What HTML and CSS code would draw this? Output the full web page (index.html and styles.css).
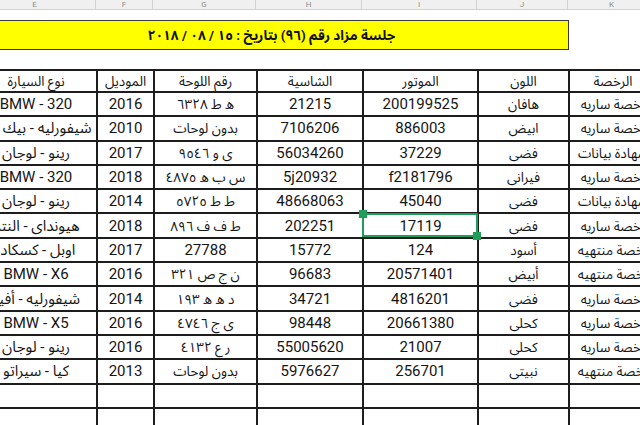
FILE: index.html
```html
<!DOCTYPE html>
<html lang="ar">
<head>
<meta charset="utf-8">
<link rel="stylesheet" href="styles.css">
</head>
<body>
<div class="sheet">
  <div class="colbar">
    <div>E</div><div>F</div><div>G</div><div>H</div><div>I</div><div>J</div><div>K</div>
  </div>
  <div class="titlebar" dir="rtl">جلسة مزاد رقم (٩٦) بتاريخ : ١٥ / ٠٨ / ٢٠١٨</div>
  <div class="grid-wrap">
    <table class="data">
      <colgroup>
        <col class="c-e"><col class="c-f"><col class="c-g"><col class="c-h"><col class="c-i"><col class="c-j"><col class="c-k">
      </colgroup>
      <thead>
        <tr><th class="ar" dir="rtl">نوع السيارة</th><th class="ar" dir="rtl">الموديل</th><th class="ar" dir="rtl">رقم اللوحة</th><th class="ar" dir="rtl">الشاسية</th><th class="ar" dir="rtl">الموتور</th><th class="ar" dir="rtl">اللون</th><th class="ar" dir="rtl">الرخصة</th></tr>
      </thead>
      <tbody>
        <tr><td>BMW - 320</td><td>2016</td><td class="ar" dir="rtl">ه ط ٦٣٢٨</td><td>21215</td><td>200199525</td><td class="ar" dir="rtl">هافان</td><td class="ar" dir="rtl">رخصة ساريه</td></tr>
        <tr><td dir="rtl">شيفورليه - بيك أب</td><td>2010</td><td class="ar" dir="rtl">بدون لوحات</td><td>7106206</td><td>886003</td><td class="ar" dir="rtl">ابيض</td><td class="ar" dir="rtl">رخصة ساريه</td></tr>
        <tr><td dir="rtl">رينو - لوجان</td><td>2017</td><td class="ar" dir="rtl">ى و ٩٥٤٦</td><td>56034260</td><td>37229</td><td class="ar" dir="rtl">فضى</td><td class="ar" dir="rtl">شهادة بيانات</td></tr>
        <tr><td>BMW - 320</td><td>2018</td><td class="ar" dir="rtl">س ب ه ٤٨٧٥</td><td>5j20932</td><td>f2181796</td><td class="ar" dir="rtl">فيرانى</td><td class="ar" dir="rtl">رخصة ساريه</td></tr>
        <tr><td dir="rtl">رينو - لوجان</td><td>2014</td><td class="ar" dir="rtl">ط ط ٥٧٢٥</td><td>48668063</td><td>45040</td><td class="ar" dir="rtl">فضى</td><td class="ar" dir="rtl">شهادة بيانات</td></tr>
        <tr><td dir="rtl">هيونداى - النترا</td><td>2018</td><td class="ar" dir="rtl">ط ف ف ٨٩٦</td><td>202251</td><td>17119</td><td class="ar" dir="rtl">فضى</td><td class="ar" dir="rtl">رخصة ساريه</td></tr>
        <tr><td dir="rtl">اوبل - كسكادا</td><td>2017</td><td>27788</td><td>15772</td><td>124</td><td class="ar" dir="rtl">أسود</td><td class="ar" dir="rtl">رخصة منتهيه</td></tr>
        <tr><td>BMW - X6</td><td>2016</td><td class="ar" dir="rtl">ن ج ص ٣٢١</td><td>96683</td><td>20571401</td><td class="ar" dir="rtl">أبيض</td><td class="ar" dir="rtl">رخصة منتهيه</td></tr>
        <tr><td dir="rtl">شيفورليه - أفيو</td><td>2014</td><td class="ar" dir="rtl">د ه ه ١٩٣</td><td>34721</td><td>4816201</td><td class="ar" dir="rtl">فضى</td><td class="ar" dir="rtl">رخصة ساريه</td></tr>
        <tr><td>BMW - X5</td><td>2016</td><td class="ar" dir="rtl">ى ج ٤٧٤٦</td><td>98448</td><td>20661380</td><td class="ar" dir="rtl">كحلى</td><td class="ar" dir="rtl">رخصة ساريه</td></tr>
        <tr><td dir="rtl">رينو - لوجان</td><td>2016</td><td class="ar" dir="rtl">ر ع ٤١٣٢</td><td>55005620</td><td>21007</td><td class="ar" dir="rtl">كحلى</td><td class="ar" dir="rtl">رخصة ساريه</td></tr>
        <tr><td dir="rtl">كيا - سيراتو</td><td>2013</td><td class="ar" dir="rtl">بدون لوحات</td><td>5976627</td><td>256701</td><td class="ar" dir="rtl">نبيتى</td><td class="ar" dir="rtl">رخصة منتهيه</td></tr>
        <tr><td></td><td></td><td></td><td></td><td></td><td></td><td></td></tr>
        <tr><td></td><td></td><td></td><td></td><td></td><td></td><td></td></tr>
      </tbody>
    </table>
    <div class="sel"><span class="handle tl"></span><span class="handle br"></span></div>
  </div>
</div>
</body>
</html>
```
FILE: styles.css
```css
html, body {
  margin: 0;
  padding: 0;
  background: #ffffff;
  overflow: hidden;
}
body {
  width: 640px;
  height: 425px;
  font-family: Roboto, "Noto Sans Arabic", "Noto Naskh Arabic", "DejaVu Sans", sans-serif;
  color: #151515;
}
.sheet {
  margin-left: -26px;
  width: 682px;
}
.colbar {
  display: grid;
  grid-template-columns: 122px 57px 103px 106px 115px 91px 88px;
  height: 10px;
  box-sizing: border-box;
  background: #f0f0f0;
  border-bottom: 1px solid #d2d2d2;
}
.colbar div {
  border-right: 1px solid #d2d2d2;
  font: 8px/9px Roboto, sans-serif;
  color: #8c8c8c;
  text-align: center;
}
.titlebar {
  margin-top: 10px;
  width: 595px;
  height: 30px;
  box-sizing: border-box;
  border: 1px solid #3a3a3a;
  background: #ffff00;
  display: flex;
  align-items: center;
  justify-content: center;
  font-size: 13.5px;
  font-weight: bold;
  color: #111;
}
.grid-wrap {
  position: relative;
  margin-top: 19px;
}
.data {
  border-collapse: collapse;
  table-layout: fixed;
  width: 682px;
}
.c-e { width: 122px; }
.c-f { width: 57px; }
.c-g { width: 103px; }
.c-h { width: 106px; }
.c-i { width: 115px; }
.c-j { width: 91px; }
.c-k { width: 88px; }
.data th, .data td {
  border: 2px solid #1d1d1d;
  padding: 0 4px;
  text-align: center;
  white-space: nowrap;
  overflow: hidden;
  font-size: 15px;
  font-weight: normal;
  line-height: 18px;
}
.data .ar {
  font-size: 13.5px;
}
.data thead tr { height: 22px; }
.data tbody tr { height: 24.3px; }
.sel {
  position: absolute;
  left: 388px;
  top: 144px;
  width: 116px;
  height: 24px;
  box-sizing: border-box;
  border: 2px solid #1f9e5a;
}
.handle {
  position: absolute;
  width: 8px;
  height: 8px;
  background: #1f9e5a;
}
.handle.tl { left: -5px; top: -5px; }
.handle.br { right: -5px; bottom: -5px; }
```
